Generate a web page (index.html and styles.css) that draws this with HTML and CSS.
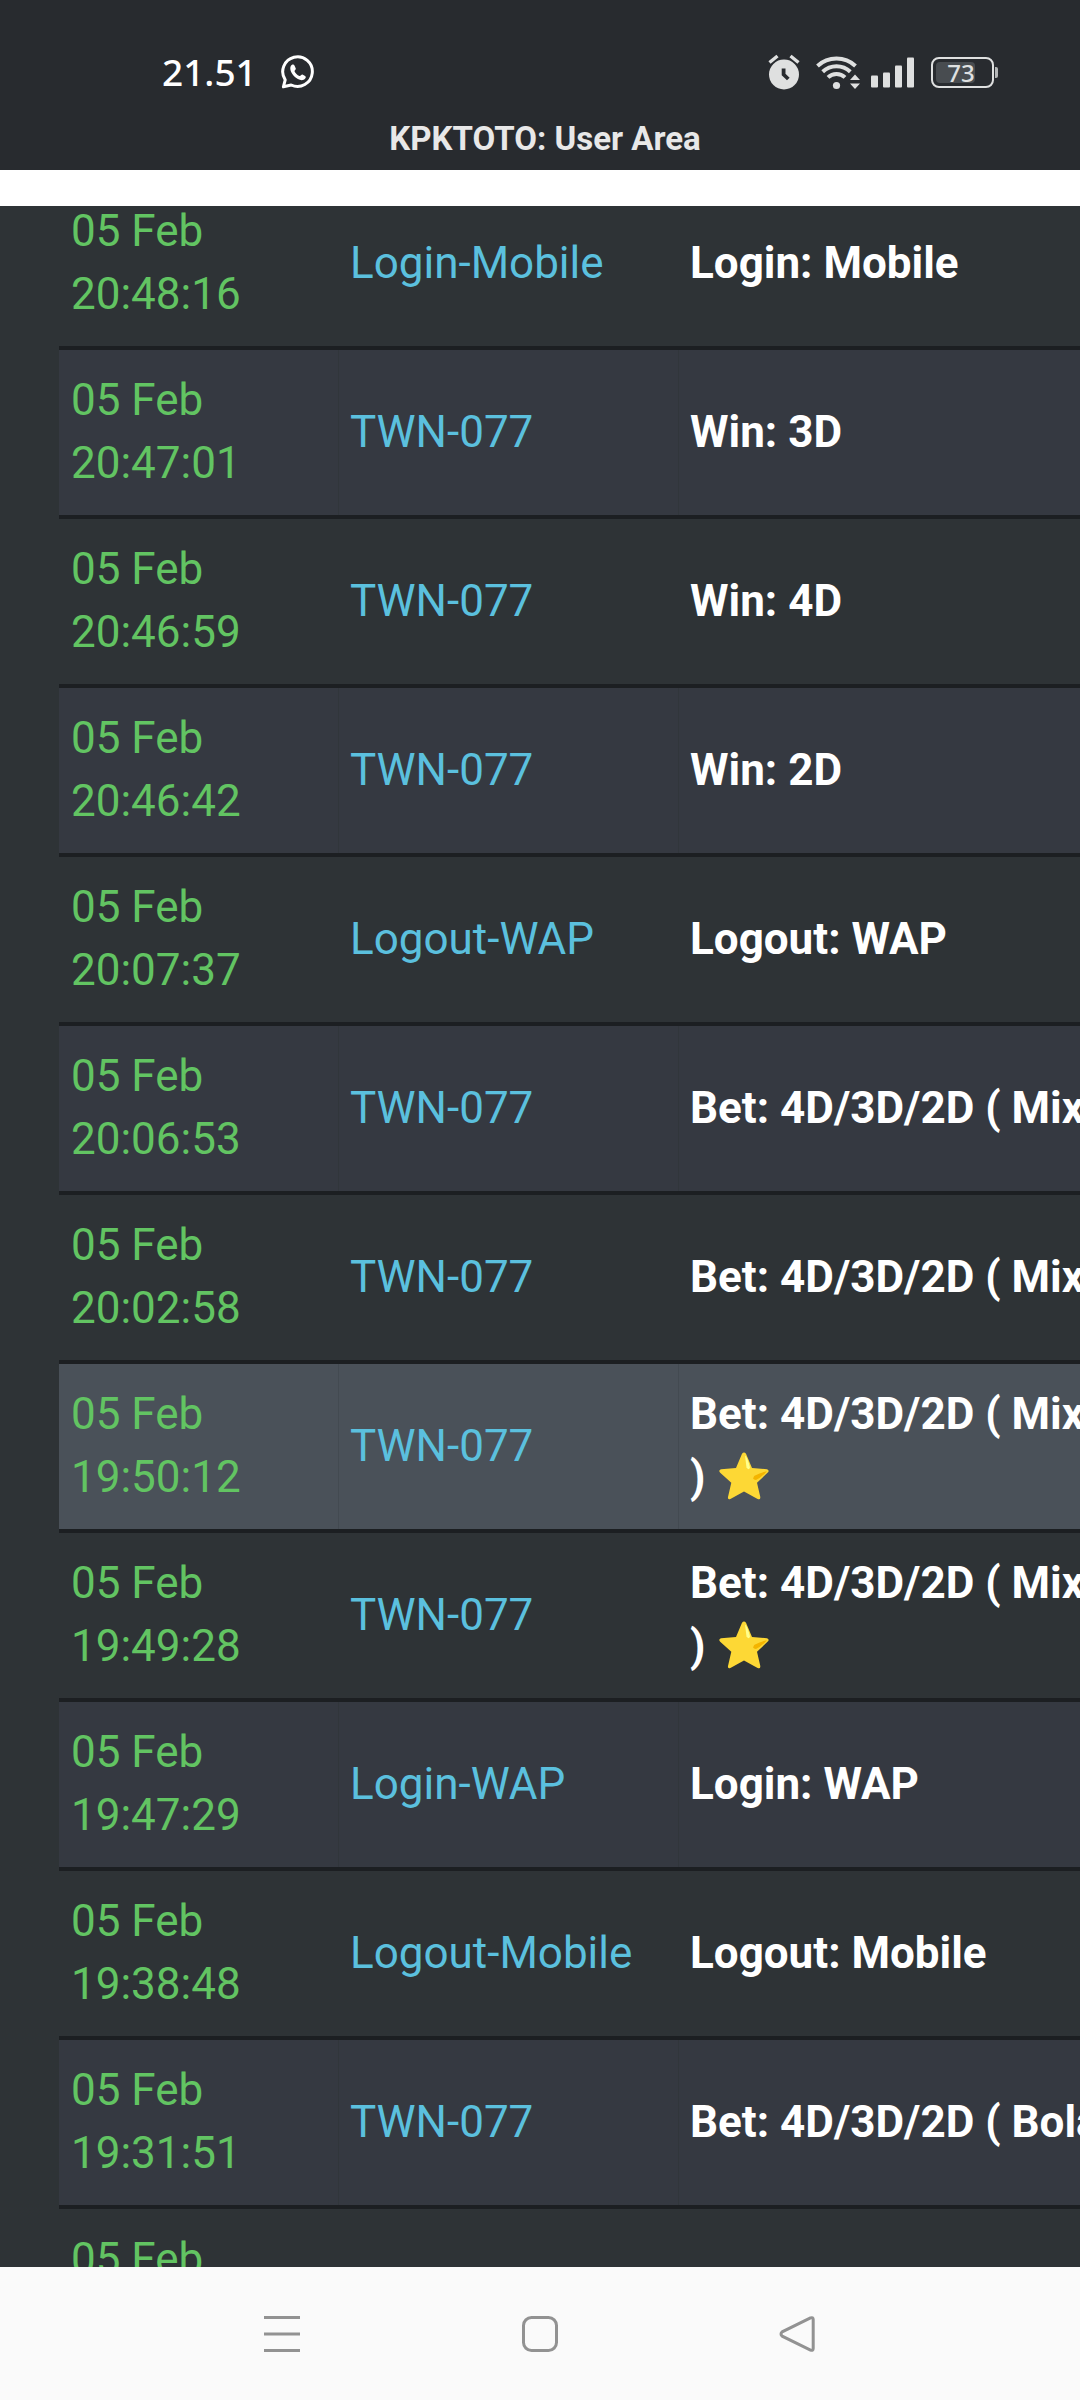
FILE: index.html
```html
<!DOCTYPE html>
<html lang="id">
<head>
    <meta charset="UTF-8">
    <meta name="viewport" content="width=device-width, initial-scale=1.0">
    <title>KPKTOTO: User Area</title>
    <link rel="stylesheet" href="styles.css">
</head>
<body>

<header class="header">
    <div class="status">
        <div class="status-left">
            <span class="time">21.51</span>
            <svg width="34" height="34" viewBox="0 0 34 34" aria-hidden="true">
                <path d="M2.4 31.8 4.2 24.8A14.8 14.8 0 1 1 10.2 30Z" fill="none" stroke="#fff" stroke-width="3" stroke-linejoin="round"/>
                <path d="M9.7 11.3C10.5 9.4 12.9 9 13.6 10.7L14.8 13.4C15.2 14.3 13.2 15.4 13.5 16.2C14.5 18.4 16.1 19.9 18.5 21C19.5 21.4 20.5 19 21.5 19.5L24.1 20.9C25.7 21.8 24.2 24 22.6 24.8C19.9 26 16 24.2 13.1 21.3C10.3 18.4 8.4 14.1 9.7 11.3Z" fill="#fff"/>
            </svg>
        </div>
        <div class="status-right">
            <svg width="32" height="36" viewBox="0 0 32 36" aria-hidden="true">
                <circle cx="16" cy="20.5" r="15" fill="#dfe0e0"/>
                <path d="M1.5 8.5 9.5 2M30.5 8.5 22.5 2" stroke="#dfe0e0" stroke-width="3.4"/>
                <path d="M15.6 14.5V20.5L20.3 25" fill="none" stroke="#282b2f" stroke-width="3.8"/>
            </svg>
            <svg width="45" height="36" viewBox="0 0 45 36" aria-hidden="true">
                <g fill="none" stroke="#dfe0e0" stroke-width="4">
                    <path d="M1.5 12A28 28 0 0 1 39.5 12"/>
                    <path d="M6.7 17.8A20 20 0 0 1 34.3 17.8"/>
                    <path d="M12 23.4A12.5 12.5 0 0 1 29 23.4"/>
                </g>
                <circle cx="20.5" cy="31.5" r="3.6" fill="#dfe0e0"/>
                <path d="M34 26 39 20.5 44 26ZM34 29.5 39 35 44 29.5Z" fill="#dfe0e0"/>
            </svg>
            <svg width="44" height="36" viewBox="0 0 44 36" fill="#dfe0e0" aria-hidden="true">
                <rect x="0" y="21.5" width="7" height="12" rx="1"/>
                <rect x="12" y="18.5" width="7" height="15" rx="1"/>
                <rect x="24" y="11.5" width="7" height="22" rx="1"/>
                <rect x="36" y="3.5" width="7" height="30" rx="1"/>
            </svg>
            <span class="battery"><span class="battery-level">73</span></span>
        </div>
    </div>
    <h1 class="title">KPKTOTO: User Area</h1>
</header>

<main class="content">
    <table class="history">
        <colgroup>
            <col class="col-date">
            <col class="col-game">
            <col class="col-desc">
        </colgroup>
        <tbody>
            <tr>
                <td class="date">05 Feb<br>20:48:16</td>
                <td class="game">Login-Mobile</td>
                <td class="desc">Login: Mobile</td>
            </tr>
            <tr>
                <td class="date">05 Feb<br>20:47:01</td>
                <td class="game">TWN-077</td>
                <td class="desc">Win: 3D</td>
            </tr>
            <tr>
                <td class="date">05 Feb<br>20:46:59</td>
                <td class="game">TWN-077</td>
                <td class="desc">Win: 4D</td>
            </tr>
            <tr>
                <td class="date">05 Feb<br>20:46:42</td>
                <td class="game">TWN-077</td>
                <td class="desc">Win: 2D</td>
            </tr>
            <tr>
                <td class="date">05 Feb<br>20:07:37</td>
                <td class="game">Logout-WAP</td>
                <td class="desc">Logout: WAP</td>
            </tr>
            <tr>
                <td class="date">05 Feb<br>20:06:53</td>
                <td class="game">TWN-077</td>
                <td class="desc">Bet: 4D/3D/2D ( Mix</td>
            </tr>
            <tr>
                <td class="date">05 Feb<br>20:02:58</td>
                <td class="game">TWN-077</td>
                <td class="desc">Bet: 4D/3D/2D ( Mix</td>
            </tr>
            <tr class="active">
                <td class="date">05 Feb<br>19:50:12</td>
                <td class="game">TWN-077</td>
                <td class="desc">Bet: 4D/3D/2D ( Mix<br>)
                    <svg class="star" viewBox="0 0 50 48" role="img" aria-label="star">
                        <path d="M23 1.8Q25 -1 27 1.8L33 16 48 17.2Q51 18.5 48.5 20.8L38 30.8 41.3 45Q41.5 48.3 38.6 47L25 39.6 11.4 47Q8.5 48.3 9 45L12.3 30.8 1.2 20.8Q-1 18.5 2 17.2L17 16Z" fill="#fdd835"/>
                        <path d="M26 3.5Q28.5 5 31 15.5Q30 19 27.5 15.5Z" fill="#ffff8d"/>
                        <path d="M48 19.2Q43 20 35.5 23.8Q32.5 27.5 37 28Q42 26 48 19.2Z" fill="#f4b400"/>
                    </svg>
                </td>
            </tr>
            <tr>
                <td class="date">05 Feb<br>19:49:28</td>
                <td class="game">TWN-077</td>
                <td class="desc">Bet: 4D/3D/2D ( Mix<br>)
                    <svg class="star" viewBox="0 0 50 48" role="img" aria-label="star">
                        <path d="M23 1.8Q25 -1 27 1.8L33 16 48 17.2Q51 18.5 48.5 20.8L38 30.8 41.3 45Q41.5 48.3 38.6 47L25 39.6 11.4 47Q8.5 48.3 9 45L12.3 30.8 1.2 20.8Q-1 18.5 2 17.2L17 16Z" fill="#fdd835"/>
                        <path d="M26 3.5Q28.5 5 31 15.5Q30 19 27.5 15.5Z" fill="#ffff8d"/>
                        <path d="M48 19.2Q43 20 35.5 23.8Q32.5 27.5 37 28Q42 26 48 19.2Z" fill="#f4b400"/>
                    </svg>
                </td>
            </tr>
            <tr>
                <td class="date">05 Feb<br>19:47:29</td>
                <td class="game">Login-WAP</td>
                <td class="desc">Login: WAP</td>
            </tr>
            <tr>
                <td class="date">05 Feb<br>19:38:48</td>
                <td class="game">Logout-Mobile</td>
                <td class="desc">Logout: Mobile</td>
            </tr>
            <tr>
                <td class="date">05 Feb<br>19:31:51</td>
                <td class="game">TWN-077</td>
                <td class="desc">Bet: 4D/3D/2D ( Bola</td>
            </tr>
            <tr>
                <td class="date">05 Feb</td>
                <td class="game"></td>
                <td class="desc"></td>
            </tr>
        </tbody>
    </table>
</main>

<nav class="navbar">
    <button type="button" class="nav-btn" aria-label="Menu">
        <svg width="38" height="38" viewBox="0 0 38 38">
            <path d="M1 2.5H37M1 19H37M1 35.5H37"/>
        </svg>
    </button>
    <button type="button" class="nav-btn" aria-label="Home">
        <svg width="38" height="38" viewBox="0 0 38 38">
            <rect x="2.5" y="2.5" width="33" height="33" rx="8"/>
        </svg>
    </button>
    <button type="button" class="nav-btn" aria-label="Back">
        <svg width="38" height="38" viewBox="0 0 38 38">
            <path d="M31.5 2.9 3.2 16.8Q.8 19 3.2 21.2L31.5 35.1Q34.2 36 34.2 33.5V4.5Q34.2 2 31.5 2.9Z"/>
        </svg>
    </button>
</nav>

</body>
</html>
```

FILE: styles.css
```css
body {
    margin: 0;
    height: 100vh;
    display: flex;
    flex-direction: column;
    overflow: hidden;
    background-color: #fff;
    font-family: Roboto, "Liberation Sans", sans-serif;
}

/* status bar + page title */
.header {
    background-color: #282b2f;
    padding-bottom: 11px;
}

.status {
    display: flex;
    justify-content: space-between;
    align-items: center;
    height: 38px;
    padding: 53px 86px 28px 162px;
}

.status-left,
.status-right {
    display: flex;
    align-items: center;
}

.status-left {
    gap: 24px;
}

.status-right {
    gap: 16px;
}

.status-right svg + svg {
    margin-right: -6px;
}

.time {
    font-family: "Noto Sans", sans-serif;
    font-size: 37px;
    line-height: 38px;
    font-weight: 500;
    color: #fff;
}

.battery {
    position: relative;
    box-sizing: border-box;
    width: 63px;
    height: 31px;
    margin-left: 6px;
    padding: 3px;
    border: 2px solid #dfe0e0;
    border-radius: 8px;
}

.battery::after {
    content: "";
    position: absolute;
    top: 8px;
    right: -6px;
    width: 3px;
    height: 11px;
    border-radius: 0 2px 2px 0;
    background-color: #b5b7b8;
}

.battery-level {
    display: block;
    width: 73%;
    height: 21px;
    border-radius: 4px;
    background-color: #484c50;
    color: #dfe0e0;
    font-family: "Noto Sans", sans-serif;
    font-size: 24px;
    line-height: 21px;
    font-weight: 500;
    text-align: right;
}

.title {
    margin: 0;
    padding-left: 10px;
    font-size: 33px;
    line-height: 40px;
    font-weight: bold;
    text-align: center;
    color: #e8e8e8;
}

/* history list, scrolled under the title */
.content {
    flex: 1;
    min-height: 0;
    margin-top: 36px;
    padding-left: 59px;
    overflow: hidden;
    background-color: #2e3336;
}

.history {
    width: 1080px;
    margin-top: -25px;
    table-layout: fixed;
    border-collapse: separate;
    border-spacing: 0;
    font-size: 44px;
    line-height: 63px;
}

.col-date {
    width: 279px;
}

.col-game {
    width: 340px;
}

.history td {
    padding: 19px 12px 20px;
    border-bottom: 4px solid #1c1f22;
    vertical-align: middle;
    white-space: nowrap;
}

.history tr:nth-child(even) td {
    background-color: #353941;
}

.history tr:nth-child(even) td + td {
    box-shadow: inset 1px 0 #31363b;
}

.history tr.active td {
    background-color: #4a5159;
}

.history tr.active td + td {
    box-shadow: inset 1px 0 #434a51;
}

.history .date {
    color: #62c462;
}

.history .game {
    color: #5bc0de;
}

.history .desc {
    color: #fff;
    font-weight: bold;
}

.star {
    width: 50px;
    height: 48px;
    margin-left: 3px;
    vertical-align: -8px;
}

/* bottom buttons */
.navbar {
    display: flex;
    justify-content: center;
    gap: 158px;
    height: 133px;
    background-color: #fafafa;
}

.nav-btn {
    width: 100px;
    padding: 0;
    border: 0;
    background: none;
    display: flex;
    align-items: center;
    justify-content: center;
}

.nav-btn svg {
    fill: none;
    stroke: #929292;
    stroke-width: 3;
}
```
